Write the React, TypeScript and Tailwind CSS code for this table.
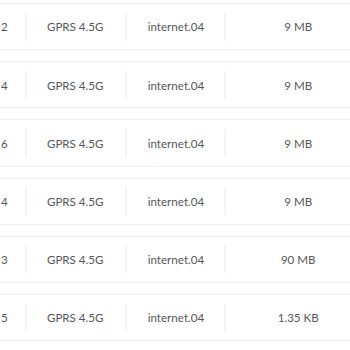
import React from 'react';

interface UsageRow {
    id: string;
    network: string;
    apn: string;
    volume: string;
}

const rows: UsageRow[] = [
    { id: '2', network: 'GPRS 4.5G', apn: 'internet.04', volume: '9 MB' },
    { id: '4', network: 'GPRS 4.5G', apn: 'internet.04', volume: '9 MB' },
    { id: '6', network: 'GPRS 4.5G', apn: 'internet.04', volume: '9 MB' },
    { id: '4', network: 'GPRS 4.5G', apn: 'internet.04', volume: '9 MB' },
    { id: '3', network: 'GPRS 4.5G', apn: 'internet.04', volume: '90 MB' },
    { id: '5', network: 'GPRS 4.5G', apn: 'internet.04', volume: '1.35 KB' },
];

const Divider = () => <div className="w-[2px] h-[28px] bg-[#f4f4f6] shrink-0" />;

export default function App() {
    return (
        <div
            className="w-[350px] h-[350px] overflow-hidden bg-white text-[11.6px] text-[#575757]"
            style={{ fontFamily: 'Lato, "Open Sans", sans-serif' }}
        >
            <div className="flex flex-col gap-[11px] pt-[3px]">
                {rows.map((row, i) => (
                    <div
                        key={i}
                        className="flex items-center h-[47.2px] border-y border-[#efeff2] w-[370px] shrink-0"
                    >
                        <div className="w-[25px] pl-[1px] pt-[1px]">{row.id}</div>
                        <Divider />
                        <div className="w-[98px] pl-[20px] pt-[1px]">{row.network}</div>
                        <Divider />
                        <div className="w-[98px] pl-[21px] pt-[1px]">{row.apn}</div>
                        <Divider />
                        <div className="w-[144px] text-center pt-[1px]">{row.volume}</div>
                    </div>
                ))}
            </div>
        </div>
    );
}
